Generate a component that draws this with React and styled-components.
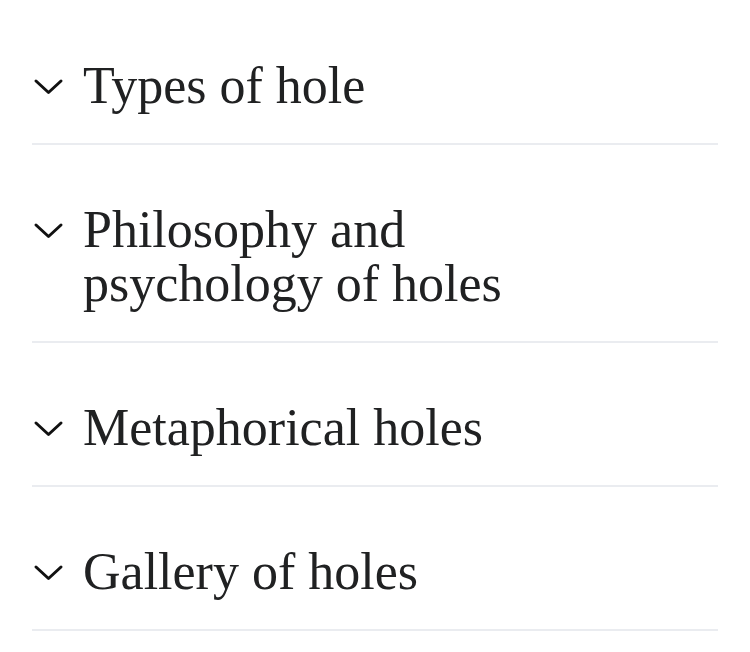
import styled, { createGlobalStyle } from "styled-components";

const sections = [
  "Types of hole",
  "Philosophy and psychology of holes",
  "Metaphorical holes",
  "Gallery of holes",
];

const Global = createGlobalStyle`
  body {
    margin: 0;
    background: #ffffff;
  }
`;

const List = styled.div`
  padding: 1px 32px 0 32px;
`;

const Heading = styled.div`
  display: flex;
  align-items: flex-start;
  padding: 58px 0 30px 0;
  border-bottom: 2px solid #eaecf0;
  cursor: pointer;
`;

const Chevron = styled.svg`
  flex: none;
  width: 32px;
  height: 18px;
  margin: 19px 19px 0 0;
`;

const Title = styled.h2`
  margin: 0;
  font-family: "Liberation Serif", "Times New Roman", serif;
  font-weight: normal;
  font-size: 52px;
  line-height: 54px;
  color: #202122;
  max-width: 440px;
`;

const ChevronIcon = () => (
  <Chevron viewBox="0 0 32 18">
    <path
      d="M4 3 L16.5 14.5 L29 3"
      fill="none"
      stroke="#111111"
      strokeWidth="3"
      strokeLinecap="round"
      strokeLinejoin="round"
    />
  </Chevron>
);

export default function App() {
  return (
    <>
      <Global />
      <List>
        {sections.map((s) => (
          <Heading key={s}>
            <ChevronIcon />
            <Title>{s}</Title>
          </Heading>
        ))}
      </List>
    </>
  );
}
